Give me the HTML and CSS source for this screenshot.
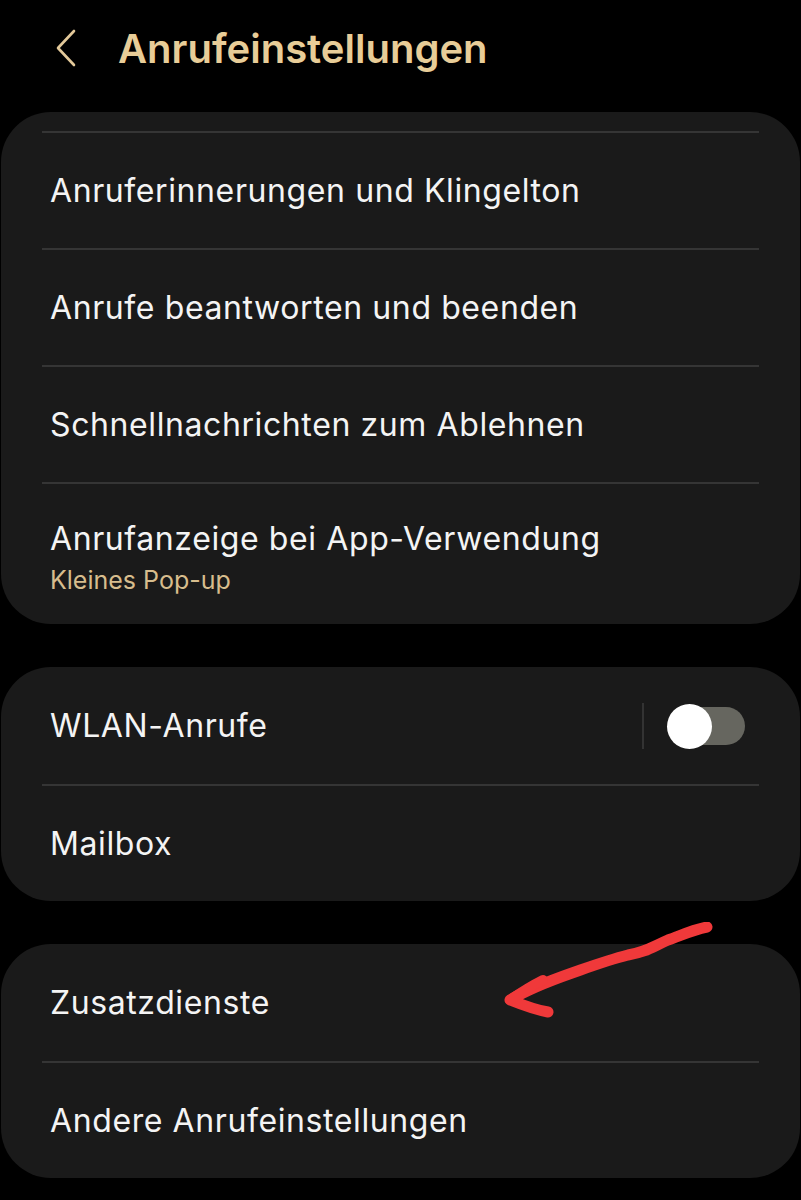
FILE: index.html
```html
<!DOCTYPE html>
<html lang="de">
<head>
<meta charset="utf-8">
<title>Anrufeinstellungen</title>
<link rel="stylesheet" href="styles.css">
</head>
<body>
<div class="screen">
  <header class="header">
    <svg class="back" width="24" height="38" viewBox="0 0 24 38"><path d="M20 2 L4 19 L20 36" fill="none" stroke="#e3c99a" stroke-width="2.6" stroke-linecap="round" stroke-linejoin="round"/></svg>
    <h1 class="title">Anrufeinstellungen</h1>
  </header>

  <section class="card card-first">
    <div class="row"><span class="label">Anruferinnerungen und Klingelton</span></div>
    <div class="row"><span class="label">Anrufe beantworten und beenden</span></div>
    <div class="row"><span class="label">Schnellnachrichten zum Ablehnen</span></div>
    <div class="row row-two">
      <span class="label">Anrufanzeige bei App-Verwendung</span>
      <span class="sub">Kleines Pop-up</span>
    </div>
  </section>

  <section class="card">
    <div class="row row-toggle">
      <span class="label">WLAN-Anrufe</span>
      <div class="toggle-wrap">
        <span class="vsep"></span>
        <span class="toggle"><span class="knob"></span></span>
      </div>
    </div>
    <div class="row"><span class="label">Mailbox</span></div>
  </section>

  <section class="card card-arrow">
    <div class="row"><span class="label">Zusatzdienste</span></div>
    <div class="row"><span class="label">Andere Anrufeinstellungen</span></div>
    <svg class="arrow" width="230" height="110" viewBox="0 0 230 110">
      <path d="M207 5 C192 8 182 13 168 18 C152 25 146 30 128 33 C108 38 92 44 72 51 C52 58 30 66 10 78 C25 84 36 88 48 90" fill="none" stroke="#f0393a" stroke-width="11" stroke-linecap="round" stroke-linejoin="round"/>
      <path d="M10 78 C20 71 31 64 43 58" fill="none" stroke="#f0393a" stroke-width="10" stroke-linecap="round"/>
    </svg>
  </section>
</div>
</body>
</html>
```
FILE: styles.css
```css
* { box-sizing: border-box; }
html, body { margin: 0; padding: 0; background: #000; }
body { font-family: Inter, Roboto, "Noto Sans", sans-serif; color: #f4f4f4; }
.screen { width: 801px; min-height: 1200px; background: #000; overflow: hidden; }
.header { height: 112px; display: flex; align-items: center; padding: 0 0 16px 54px; gap: 40px; }
.back { display: block; }
.title { margin: 0; font-size: 40px; font-weight: 600; color: #e8cd98; letter-spacing: 0; }
.card { background: #1a1a1a; border-radius: 50px; margin: 0 1px 43px 1px; padding: 0 41px; position: relative; }
.card-first { padding-top: 19px; margin-bottom: 43px; }
.row { min-height: 117px; display: flex; flex-direction: column; justify-content: center; padding: 0 8px; border-top: 2px solid #353535; }
.card > .row:first-child { border-top: none; }
.card-first > .row:first-child { border-top: 2px solid #353535; }
.label { font-size: 32px; line-height: 40px; letter-spacing: 0.6px; color: #f4f4f4; }
.row-two { min-height: 142px; padding-top: 6px; padding-bottom: 0; }
.sub { font-size: 25px; line-height: 30px; color: #d7bd8d; margin-top: 6px; }
.row-toggle { flex-direction: row; align-items: center; justify-content: space-between; padding-right: 14px; }
.toggle-wrap { display: flex; align-items: center; gap: 24px; }
.vsep { width: 2px; height: 46px; background: #333; }
.toggle { width: 77px; height: 38px; border-radius: 19px; background: #66665f; position: relative; }
.knob { position: absolute; left: -1px; top: -3px; width: 45px; height: 45px; border-radius: 50%; background: #fff; }
.card-arrow { margin-bottom: 0; }
.arrow { position: absolute; left: 499px; top: -22px; }
```
